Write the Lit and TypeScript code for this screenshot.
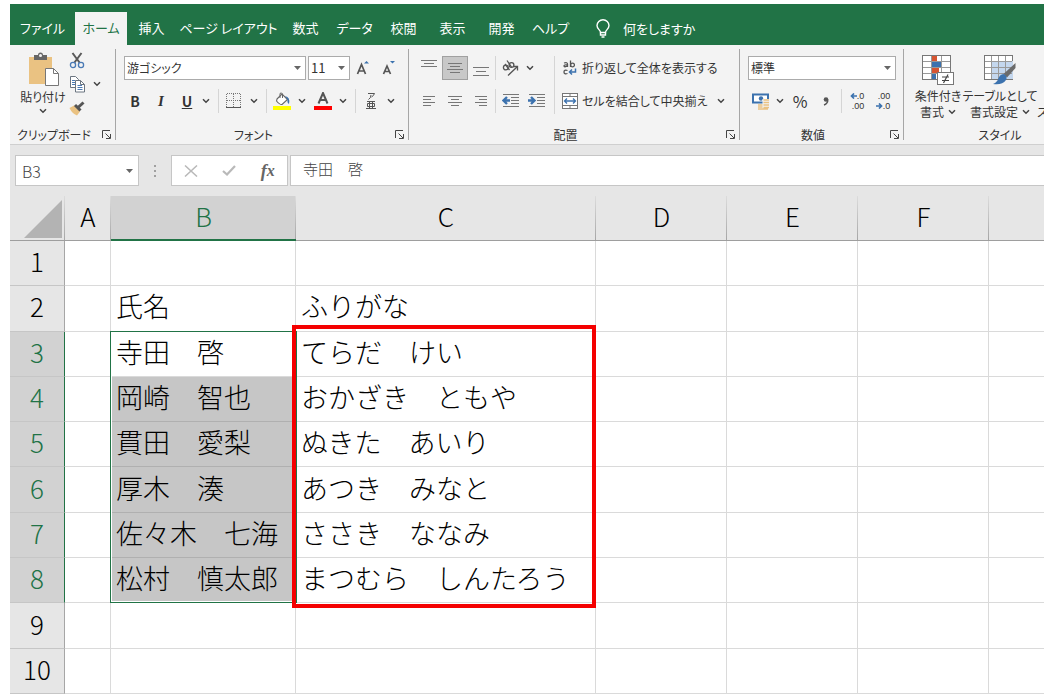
import { LitElement, html, css, svg, nothing } from "lit";
import { customElement, property, state } from "lit/decorators.js";
import { classMap } from "lit/directives/class-map.js";

const chevron = svg`<svg width="8" height="6" viewBox="0 0 8 6"><path d="M1 1.2L4 4.2L7 1.2" fill="none" stroke="#444" stroke-width="1.5"/></svg>`;
const triangle = svg`<svg class="tri" width="7" height="4" viewBox="0 0 7 4"><path d="M0 0H7L3.5 4Z" fill="#666"/></svg>`;

const lines = (rows: number[][]) => svg`<svg width="16" height="16" viewBox="0 0 16 16" stroke="#777" stroke-width="1">
  ${rows.map(([x1, x2, y]) => svg`<path d="M${x1} ${y + 0.5}H${x2}"/>`)}
</svg>`;

const icons = {
  bulb: svg`<svg width="14" height="19" viewBox="0 0 14 19" fill="none" stroke="#fff" stroke-width="1.4"><path d="M4.5 13.5C4.5 11 1 10 1 6.5A6 5.8 0 0 1 13 6.5C13 10 9.500 11 9.500 13.500Z"/><path d="M4.500 13.500V16H9.500V13.500M5.500 18H8.500"/></svg>`,
  paste: svg`<svg width="32" height="34" viewBox="0 0 32 34"><rect x="2" y="5" width="23" height="27" fill="#eac282"/><path d="M7 3H11Q11 0.500 13.500 0.500T16 3H20V8H7Z" fill="#666"/><circle cx="13.500" cy="3.500" r="1.500" fill="#f3f3f3"/><path d="M18.500 16.500H26.500L31.500 21.500V33.500H18.500Z" fill="#fff" stroke="#777"/><path d="M26.500 16.500V21.500H31.500" fill="none" stroke="#777"/></svg>`,
  cut: svg`<svg width="16" height="17" viewBox="0 0 16 17" fill="none"><path d="M3.500 1L10.500 10.500M12.500 1L5.500 10.500" stroke="#5a5a5a" stroke-width="2"/><circle cx="4" cy="13" r="2.600" stroke="#4a7ab5" stroke-width="1.300"/><circle cx="12" cy="13" r="2.600" stroke="#4a7ab5" stroke-width="1.300"/></svg>`,
  copy: svg`<svg width="16" height="17" viewBox="0 0 16 17" fill="#fff" stroke="#6b7580"><path d="M1.500 0.500H6.500L9.500 3.500V11.500H1.500Z"/><path d="M3 4.500H6M3 6.500H6M3 8.500H6" stroke="#4a7ab5"/><path d="M6.500 4.500H11.500L15.500 8.500V16H6.500Z"/><path d="M11.500 4.500V8.500H15.500" fill="none"/><path d="M8.500 9.500H13M8.500 11.500H13.500M8.500 13.500H13.500" stroke="#4a7ab5"/></svg>`,
  painter: svg`<svg width="16" height="15" viewBox="0 0 16 15"><path d="M0.500 7L5 4.500L11 10.500L8 14.500Q3 12.500 0.500 7Z" fill="#eac282"/><path d="M6 4L11.500 9.500" stroke="#555" stroke-width="3"/><path d="M9 6.500L14.500 1.500" stroke="#555" stroke-width="3"/></svg>`,
  growA: svg`<svg width="14" height="16" viewBox="0 0 14 16"><path d="M1.500 14L5.500 4.500L9.500 14M3 11H8" fill="none" stroke="#555" stroke-width="1.700"/><path d="M8 3.500L10.500 1L13 3.500Z" fill="#3c72ae"/></svg>`,
  shrinkA: svg`<svg width="14" height="16" viewBox="0 0 14 16"><path d="M1.500 14L5 6L8.500 14M2.500 11.500H7.500" fill="none" stroke="#555" stroke-width="1.700"/><path d="M8 1H13L10.500 3.500Z" fill="#3c72ae"/></svg>`,
  borders: svg`<svg width="16" height="16" viewBox="0 0 16 16" fill="none" stroke="#777"><path d="M0.500 1V14M7.500 1V14M14.500 1V14M1 0.500H15M1 7.500H15" stroke-dasharray="1 1"/><path d="M0 14.500H15" stroke="#555"/></svg>`,
  fill: svg`<svg width="18" height="18" viewBox="0 0 18 18"><path d="M4 7L9 2L14.500 7.500L9 12.500Q7 13 3.500 9Z" fill="#fff" stroke="#666" stroke-width="1.100"/><path d="M7 6V1.500Q8.500 0 9.500 2V6" fill="none" stroke="#666"/><path d="M12 4Q17.500 5 16 12Q14 11 14.500 7.500Z" fill="#3c72ae"/><rect x="0" y="14" width="18" height="4" fill="#ffff00"/></svg>`,
  fontColor: svg`<svg width="18" height="18" viewBox="0 0 18 18"><path d="M4.500 11.500L9 1L13.500 11.500M6 8H12" fill="none" stroke="#555" stroke-width="2"/><rect x="0" y="14" width="18" height="4" fill="#f00"/></svg>`,
  ruby: svg`<svg width="12" height="16" viewBox="0 0 12 16" fill="none" stroke="#555"><path d="M3 0.500H9.500Q8.500 3 6.500 4M6 2Q6 5 3.500 6.500M2 8.500H10M1 15.500H11M4.500 8.500V15.500M7.500 8.500V15.500M2.500 10.500H9.500V13.500H2.500Z"/></svg>`,
  orient: svg`<svg width="18" height="17" viewBox="0 0 18 17" fill="none" stroke="#555" stroke-width="1.300"><circle cx="3.800" cy="7.500" r="2.400"/><path d="M3 4L7.500 10"/><circle cx="9.500" cy="5" r="2.400"/><path d="M5 0.500L9.500 7M6 15.500L15 7"/><path d="M11.500 6.500H15.500V10.500"/></svg>`,
  outdent: svg`<svg width="18" height="16" viewBox="0 0 18 16"><path d="M1 1.500H17M9 4.500H17M9 7.500H17M9 10.500H17M1 13.500H17" stroke="#777"/><path d="M8 7.500H3M5 4L1.500 7.500L5 11" fill="none" stroke="#3c72ae" stroke-width="2.400"/></svg>`,
  indent: svg`<svg width="18" height="16" viewBox="0 0 18 16"><path d="M1 1.500H17M9 4.500H17M9 7.500H17M9 10.500H17M1 13.500H17" stroke="#777"/><path d="M0 7.500H5M3 4L6.500 7.500L3 11" fill="none" stroke="#3c72ae" stroke-width="2.400"/></svg>`,
  wrap: svg`<svg width="16" height="16" viewBox="0 0 16 16" fill="none" stroke="#555" stroke-width="1.300"><path d="M2 3Q5.500 2 5.500 4V7M5.500 5Q2 4.500 2 6Q2.500 7.500 5.500 6M8.500 0.500V7"/><circle cx="10.500" cy="5" r="1.900"/><path d="M5.500 10.500Q2 9.500 2 12Q2 14.500 5.500 13.500"/><path d="M13.500 8.500V12H8M10 9.500L7.500 12L10 14.500" stroke="#3c72ae" stroke-width="1.500"/></svg>`,
  merge: svg`<svg width="16" height="16" viewBox="0 0 16 16" fill="#fff" stroke="#777"><rect x="0.500" y="0.500" width="15" height="15"/><path d="M0.500 3.500H15.500M0.500 12.500H15.500M8 0.500V3.500M8 12.500V15.500"/><path d="M3 8H13M5 5.500L2.500 8L5 10.500M11 5.500L13.500 8L11 10.500" fill="none" stroke="#3c72ae" stroke-width="1.300"/></svg>`,
  currency: svg`<svg width="18" height="17" viewBox="0 0 18 17"><rect x="1" y="1.500" width="15" height="8" fill="#fff" stroke="#3c72ae" stroke-width="2"/><circle cx="9" cy="5.500" r="2.200" fill="#3c72ae"/><path d="M10.500 6H17.500V17H5V11H10.500Z" fill="#f3f3f3"/><path d="M11.500 7H17M11.500 9.500H17M11.500 12H17M11.500 14.500H17M6 12H10.500M6 14H10.500M6 16H16" stroke="#eac282" stroke-width="1.500"/></svg>`,
  comma: svg`<svg width="6" height="9" viewBox="0 0 6 9"><circle cx="3" cy="2.500" r="2.300" fill="#555"/><path d="M4.800 2.500Q5 6.500 1 8" fill="none" stroke="#555" stroke-width="1.400"/></svg>`,
  left: svg`<svg width="7" height="6" viewBox="0 0 7 6"><path d="M7 3H2M4 0.500L1.500 3L4 5.500" fill="none" stroke="#3c72ae" stroke-width="1.700"/></svg>`,
  right: svg`<svg width="7" height="6" viewBox="0 0 7 6"><path d="M0 3H5M3 0.500L5.500 3L3 5.500" fill="none" stroke="#3c72ae" stroke-width="1.700"/></svg>`,
  conditional: svg`<svg width="32" height="30" viewBox="0 0 32 30"><rect x="0.500" y="0.500" width="28" height="24" fill="#fff" stroke="#777"/><rect x="10" y="1" width="5" height="6" fill="#d65532"/><rect x="10" y="7" width="9" height="6" fill="#3c72ae"/><rect x="10" y="13" width="7" height="6" fill="#d65532"/><rect x="10" y="19" width="4" height="5" fill="#3c72ae"/><path d="M1 6.500H28M1 12.500H28M1 18.500H28M9.500 1V24M19.500 1V24" stroke="#999"/><rect x="15.500" y="17.500" width="16" height="12" fill="#fff" stroke="#777"/><path d="M20 22H27M20 25.500H27M26 19.500L21.500 28" stroke="#444" stroke-width="1.200"/></svg>`,
  tableStyle: svg`<svg width="32" height="31" viewBox="0 0 32 31"><rect x="0.500" y="0.500" width="28" height="24" fill="#fff" stroke="#777"/><rect x="8" y="6" width="21" height="18" fill="#c4d7ee"/><path d="M1 6.500H28M1 12.500H28M1 18.500H28M7.500 1V24M14.500 1V24M21.500 1V24" stroke="#999"/><path d="M31.500 8V13L23 22.500L19.500 19Z" fill="#6b6b6b"/><path d="M19.500 19Q24 21 22 25Q18 30.500 9 29Q13.500 27 14.500 23Q16 19.500 19.500 19Z" fill="#3c72ae"/></svg>`,
  launcher: svg`<svg width="9" height="9" viewBox="0 0 9 9" fill="none" stroke="#444"><path d="M0.500 8V0.500H8M3.500 3.500L8 8M8.500 4V8.500H4"/></svg>`,
  cancel: svg`<svg width="14" height="12" viewBox="0 0 14 12"><path d="M1 0.500L13 11.500M13 0.500L1 11.500" stroke="#b9b9b9" stroke-width="1.500"/></svg>`,
  enter: svg`<svg width="14" height="11" viewBox="0 0 14 11"><path d="M1 6L5 9.500L13 1" fill="none" stroke="#b9b9b9" stroke-width="2.200"/></svg>`,
  corner: svg`<svg width="38" height="38" viewBox="0 0 38 38"><path d="M38 0V38H0Z" fill="#b3b3b3"/></svg>`,
};

const JP = css`"Noto Sans CJK JP", "Noto Sans", sans-serif`;

const shared = css`
  :host, *, *::before { box-sizing: border-box; }
  svg { display: block; flex: none; }
  button {
    display: flex; align-items: center; justify-content: center;
    margin: 0; padding: 0; border: 0; background: none;
    color: #333; font: inherit; font-feature-settings: inherit; white-space: nowrap;
  }
  input, select { margin: 0; font: inherit; font-feature-settings: inherit; color: #333; border-radius: 0; }
`;

@customElement("ribbon-tabs")
export class RibbonTabs extends LitElement {
  static styles = [shared, css`
    :host { display: block; background: #217346; font: 13px/18px ${JP}; font-feature-settings: "palt"; }
    nav { display: flex; height: 41px; padding-top: 8px; }
    .tab { width: 49px; color: #fff; padding-bottom: 2px; }
    .file { width: 65px; }
    .home { width: 52px; }
    .wide { width: 105px; }
    .active { background: #f3f3f3; color: #217346; }
    .tell { margin-left: 21px; gap: 13px; color: #fff; }
  `];

  @state() private active = "ホーム";

  private tabs: [string, string][] = [
    ["ファイル", "file"], ["ホーム", "home"], ["挿入", ""], ["ページ レイアウト", "wide"], ["数式", ""],
    ["データ", ""], ["校閲", ""], ["表示", ""], ["開発", ""], ["ヘルプ", ""],
  ];

  render() {
    return html`<nav>
      ${this.tabs.map(([name, size]) => html`<button
        class=${classMap({ tab: true, file: size === "file", home: size === "home", wide: size === "wide", active: name === this.active })}
        @click=${() => (this.active = name)}>${name}</button>`)}
      <button class="tell">${icons.bulb}<span>何をしますか</span></button>
    </nav>`;
  }
}

@customElement("ribbon-group")
export class RibbonGroup extends LitElement {
  static styles = [shared, css`
    :host { display: flex; flex: none; }
    .body { display: flex; flex-direction: column; flex: 1; min-width: 0; }
    .foot { display: flex; align-items: center; height: 19px; margin-top: auto; }
    .label { flex: 1; text-align: center; }
    .launch { width: 17px; height: 18px; }
    .line { width: 1px; margin: 4px 0; background: #a6a6a6; }
  `];

  @property() label = "";
  @property({ type: Boolean }) open = false;

  render() {
    return html`<div class="body">
        <slot></slot>
        <div class="foot">
          <span class="label">${this.label}</span>
          ${this.open ? nothing : html`<button class="launch" aria-label=${this.label}>${icons.launcher}</button>`}
        </div>
      </div>
      ${this.open ? nothing : html`<div class="line"></div>`}`;
  }
}

@customElement("ribbon-bar")
export class RibbonBar extends LitElement {
  static styles = [shared, css`
    :host {
      display: flex; height: 100px; overflow: hidden; background: #f3f3f3; border-bottom: 1px solid #cfcfcf;
      font: 12px/16px ${JP}; font-feature-settings: "palt"; color: #333;
    }
    .clipboard { width: 106px; }
    .font { width: 293px; }
    .align { width: 331px; }
    .number { width: 164px; }
    .styles { width: 192px; }

    .clip { display: flex; padding: 3px 0 0 10px; }
    .paste { flex-direction: column; justify-content: flex-start; width: 46px; padding-top: 4px; gap: 3px; }
    .stack { display: grid; grid-template-columns: 22px 12px; column-gap: 3px; grid-auto-rows: 24px; }
    .stack .tool { width: 22px; }

    .rows { display: flex; flex-direction: column; gap: 9px; padding: 11px 6px 0 8px; }
    .row { display: flex; height: 24px; align-items: center; }
    .field { position: relative; display: flex; flex: none; height: 24px; }
    .field select {
      width: 100%; padding: 0 2px; appearance: none; border: 1px solid #ababab; background: #fff;
    }
    .field .tri { position: absolute; right: 5px; top: 10px; pointer-events: none; }
    .face { width: 182px; margin-right: 2px; }
    .size { width: 42px; }
    .size select { font-size: 13px; }
    .format { width: 148px; }

    .tool { width: 26px; height: 24px; font-size: 14px; flex: none; }
    .chev { width: 12px; height: 24px; flex: none; }
    .on { background: #c8c8c8; border: 1px solid #a0a0a0; }
    .b { font-weight: 700; }
    .i { font: italic 700 15px/16px "Liberation Serif", serif; }
    .u { font-weight: 700; text-decoration: underline; }
    .sep { width: 1px; height: 24px; background: #d5d5d5; flex: none; }
    .styling { gap: 6px; }
    .set { display: flex; margin-left: -2px; }
    .split { display: flex; gap: 5px; }
    .split .tool { width: 18px; }

    .halves { display: flex; padding: 11px 0 0 7px; }
    .half { display: flex; flex-direction: column; gap: 9px; }
    .half .sep { margin: 0 2px 0 1px; }
    .tall { width: 1px; height: 58px; margin: 0 7px 0 4px; background: #d5d5d5; }
    .text { justify-content: flex-start; gap: 4px; height: 24px; }
    .merge { justify-content: space-between; width: 165px; }

    .digits .pct { margin-left: 1px; font-size: 16px; }
    .digits .sep { margin: 0 2px; }
    .dec { display: flex; flex-direction: column; align-items: flex-end; font: 9px/10px "Liberation Sans", sans-serif; }
    .dec span { display: flex; align-items: center; }

    .bigs { display: flex; padding: 10px 0 0 7px; }
    .big { flex-direction: column; justify-content: flex-start; flex: none; width: 54px; }
    .big .pic { height: 33px; }
    .big .two { display: flex; align-items: center; gap: 4px; }
    .table { width: 70px; }
    .cut { align-items: flex-start; padding: 49px 0 0 2px; }
  `];

  private tool(name: string, icon: unknown, extra = "") {
    return html`<button class="tool ${extra}" aria-label=${name}>${icon}</button>`;
  }

  private chev(name: string) {
    return html`<button class="chev" aria-label="${name}のオプション">${chevron}</button>`;
  }

  private split(name: string, icon: unknown) {
    return html`<div class="split">${this.tool(name, icon)}${this.chev(name)}</div>`;
  }

  render() {
    return html`
      <ribbon-group class="clipboard" label="クリップボード">
        <div class="clip">
          <button class="paste">${icons.paste}<span>貼り付け</span>${chevron}</button>
          <div class="stack">
            ${this.tool("切り取り", icons.cut)}<span></span>
            ${this.tool("コピー", icons.copy)}${this.chev("コピー")}
            ${this.tool("書式のコピー", icons.painter)}
          </div>
        </div>
      </ribbon-group>

      <ribbon-group class="font" label="フォント">
        <div class="rows">
          <div class="row">
            <div class="field face"><select aria-label="フォント"><option>游ゴシック</option></select>${triangle}</div>
            <div class="field size"><select aria-label="フォント サイズ"><option>11</option></select>${triangle}</div>
            ${this.tool("拡大", icons.growA)}${this.tool("縮小", icons.shrinkA)}
          </div>
          <div class="row styling">
            <div class="set">
              ${this.tool("太字", "B", "b")}${this.tool("斜体", "I", "i")}${this.tool("下線", "U", "u")}${this.chev("下線")}
            </div>
            <span class="sep"></span>
            ${this.split("罫線", icons.borders)}
            <span class="sep"></span>
            ${this.split("塗りつぶしの色", icons.fill)}
            ${this.split("フォントの色", icons.fontColor)}
            <span class="sep"></span>
            ${this.split("ふりがな", icons.ruby)}
          </div>
        </div>
      </ribbon-group>

      <ribbon-group class="align" label="配置">
        <div class="halves">
          <div class="half">
            <div class="row">
              ${this.tool("上揃え", lines([[0, 16, 0], [3, 13, 3], [0, 16, 6]]))}
              ${this.tool("上下中央揃え", lines([[1, 15, 3], [3, 13, 6], [0, 16, 9], [3, 13, 12]]), "on")}
              ${this.tool("下揃え", lines([[0, 16, 7], [3, 13, 11], [0, 16, 15]]))}
              <span class="sep"></span>
              ${this.tool("方向", icons.orient)}${this.chev("方向")}
            </div>
            <div class="row">
              ${this.tool("左揃え", lines([[2, 14, 3], [2, 10, 6], [2, 14, 9], [2, 10, 12]]))}
              ${this.tool("中央揃え", lines([[1, 15, 3], [4, 12, 6], [1, 15, 9], [4, 12, 12]]))}
              ${this.tool("右揃え", lines([[2, 14, 3], [6, 14, 6], [2, 14, 9], [6, 14, 12]]))}
              <span class="sep"></span>
              ${this.tool("インデントを減らす", icons.outdent)}${this.tool("インデントを増やす", icons.indent)}
            </div>
          </div>
          <span class="tall"></span>
          <div class="half">
            <button class="text">${icons.wrap}<span>折り返して全体を表示する</span></button>
            <div class="row merge">
              <button class="text">${icons.merge}<span>セルを結合して中央揃え</span></button>${this.chev("結合")}
            </div>
          </div>
        </div>
      </ribbon-group>

      <ribbon-group class="number" label="数値">
        <div class="rows">
          <div class="field format"><select aria-label="表示形式"><option>標準</option></select>${triangle}</div>
          <div class="row digits">
            ${this.tool("通貨", icons.currency)}${this.chev("通貨")}
            ${this.tool("パーセント", "%", "pct")}${this.tool("桁区切り", icons.comma)}
            <span class="sep"></span>
            ${this.tool("小数点以下を増やす", html`<span class="dec"><span>${icons.left}.0</span><span>.00</span></span>`)}
            ${this.tool("小数点以下を減らす", html`<span class="dec"><span>.00</span><span>${icons.right}.0</span></span>`)}
          </div>
        </div>
      </ribbon-group>

      <ribbon-group class="styles" label="スタイル" open>
        <div class="bigs">
          <button class="big"><span class="pic">${icons.conditional}</span><span>条件付き</span><span class="two">書式${chevron}</span></button>
          <button class="big table"><span class="pic">${icons.tableStyle}</span><span>テーブルとして</span><span class="two">書式設定${chevron}</span></button>
          <button class="big cut">スタイル</button>
        </div>
      </ribbon-group>`;
  }
}

@customElement("formula-bar")
export class FormulaBar extends LitElement {
  static styles = [shared, css`
    :host {
      display: flex; height: 51px; padding: 10px 0 10px 5px; background: #e6e6e6;
      font: 300 15px/20px ${JP};
    }
    .name { display: flex; width: 124px; border: 1px solid #c6c6c6; background: #fff; }
    .name input { flex: 1; min-width: 0; padding: 0 0 0 6px; border: 0; background: none; font-size: 16px; color: #444; }
    .name button { width: 18px; }
    .dots { display: grid; place-items: center; width: 32px; }
    .actions { display: flex; width: 117px; border: 1px solid #c6c6c6; background: #fff; }
    .actions button { flex: 1; }
    .fx { font: italic 700 18px/20px "Liberation Serif", serif; color: #666; }
    .fx small { font-size: 16px; }
    .value { flex: 1; min-width: 0; margin-left: 2px; padding: 0 0 4px 12px; border: 1px solid #c6c6c6; border-right: 0; background: #fff; color: #444; }
  `];

  @property() cell = "";
  @property() value = "";

  render() {
    return html`
      <div class="name"><input aria-label="名前ボックス" .value=${this.cell}><button aria-label="名前一覧">${triangle}</button></div>
      <div class="dots"><svg width="3" height="12" viewBox="0 0 3 12" fill="#a0a0a0"><rect width="2" height="2"/><rect y="5" width="2" height="2"/><rect y="10" width="2" height="2"/></svg></div>
      <div class="actions">
        <button aria-label="キャンセル">${icons.cancel}</button>
        <button aria-label="入力">${icons.enter}</button>
        <button class="fx" aria-label="関数の挿入">f<small>x</small></button>
      </div>
      <input class="value" aria-label="数式バー" .value=${this.value}>`;
  }
}

@customElement("sheet-grid")
export class SheetGrid extends LitElement {
  static styles = [shared, css`
    :host { display: grid; font: 300 27px/36px ${JP}; color: #000; background: #fff; }
    table { width: 100%; table-layout: fixed; border-collapse: separate; border-spacing: 0; }
    .head { width: 55px; }
    .a { width: 46px; }
    .b { width: 185px; }
    .c { width: 300px; }
    .n { width: 131px; }
    th { padding: 0 0 4px; font-weight: 300; font-size: 26px; background: #e6e6e6; text-align: center; }
    thead th { position: relative; height: 45px; border-bottom: 1px solid #9e9e9e; }
    thead th::before {
      content: ""; position: absolute; top: 0; right: 0; bottom: 0; width: 1px;
      background: linear-gradient(#dcdcdc, #a6a6a6);
    }
    thead th:last-child::before { display: none; }
    .corner { padding: 0; }
    .corner svg { margin: 1px 0 0 14px; }
    thead .picked { background: #d2d2d2; color: #217346; border-bottom: 2px solid #217346; }
    tbody th { border-right: 1px solid #a6a6a6; border-bottom: 1px solid #c6c6c6; }
    tbody .picked { background: #d2d2d2; color: #217346; border-right-color: #217346; }
    td {
      position: relative; height: 45px; padding: 0 0 4px 5px; white-space: nowrap;
      border-right: 1px solid #dadada; border-bottom: 1px solid #dadada;
    }
    td:last-child { border-right: 0; }
    .shade { background: #c6c6c6; border-bottom-color: #b0b0b0; }
    .selection {
      position: absolute; z-index: 1; top: -1px; left: -1px; right: -2px; height: calc(600% + 7px);
      border: 1px solid #217346; outline: 1px solid #fff; outline-offset: -2px; pointer-events: none;
    }
    .marker {
      position: absolute; z-index: 2; top: -7px; left: -4px; right: -1px; height: calc(600% + 18px);
      border: 4px solid #f40000; pointer-events: none;
    }
  `];

  private rows: [string, string][] = [
    ["", ""],
    ["氏名", "ふりがな"],
    ["寺田　啓", "てらだ　けい"],
    ["岡崎　智也", "おかざき　ともや"],
    ["貫田　愛梨", "ぬきた　あいり"],
    ["厚木　湊", "あつき　みなと"],
    ["佐々木　七海", "ささき　ななみ"],
    ["松村　慎太郎", "まつむら　しんたろう"],
    ["", ""],
    ["", ""],
  ];

  render() {
    return html`<table>
      <colgroup><col class="head"><col class="a"><col class="b"><col class="c"><col class="n"><col class="n"><col class="n"><col></colgroup>
      <thead><tr>
        <th class="corner">${icons.corner}</th>
        ${["A", "B", "C", "D", "E", "F", ""].map((c) => html`<th scope="col" class=${classMap({ picked: c === "B" })}>${c}</th>`)}
      </tr></thead>
      <tbody>${this.rows.map(([name, kana], i) => {
        const n = i + 1;
        const first = n === 3;
        return html`<tr>
          <th scope="row" class=${classMap({ picked: n >= 3 && n <= 8 })}>${n}</th>
          <td></td>
          <td class=${classMap({ shade: n > 3 && n <= 8 })}>${name}${first ? html`<div class="selection"></div>` : nothing}</td>
          <td>${kana}${first ? html`<div class="marker"></div>` : nothing}</td>
          <td></td><td></td><td></td><td></td>
        </tr>`;
      })}</tbody>
    </table>`;
  }
}

@customElement("app-root")
export class AppRoot extends LitElement {
  static styles = css`
    :host {
      display: grid; grid-template-rows: auto auto auto 1fr; grid-template-columns: minmax(0, 1fr);
      box-sizing: border-box; min-height: 100vh; padding: 4px 10px 5px; background: #fff;
    }
  `;

  render() {
    return html`
      <ribbon-tabs></ribbon-tabs>
      <ribbon-bar></ribbon-bar>
      <formula-bar cell="B3" value="寺田　啓"></formula-bar>
      <sheet-grid></sheet-grid>`;
  }
}
